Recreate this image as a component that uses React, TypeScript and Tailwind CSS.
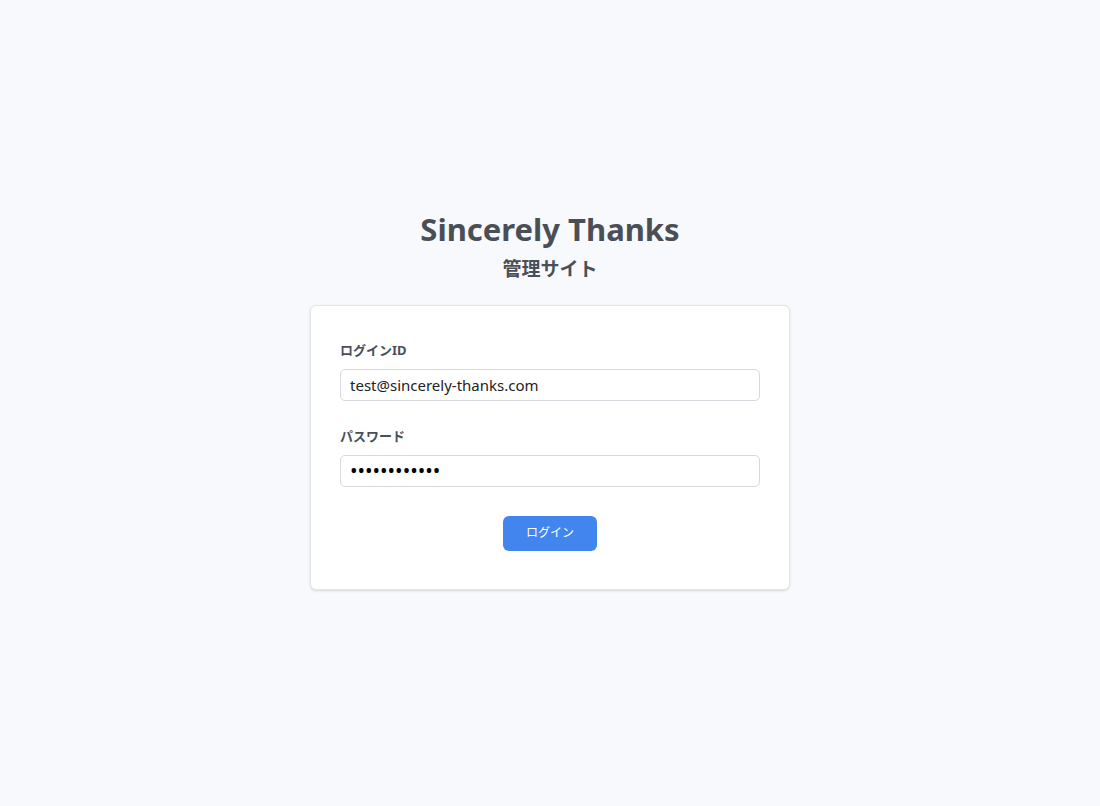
import React, { useState } from 'react';

const App: React.FC = () => {
  const [loginId, setLoginId] = useState<string>('test@sincerely-thanks.com');
  const [password, setPassword] = useState<string>('password1234');

  return (
    <div
      className="min-h-screen bg-[#f8f9fc] flex flex-col items-center justify-center pb-[6px]"
      style={{ fontFamily: '"Noto Sans", "Noto Sans CJK JP", sans-serif' }}
    >
      <h1 className="text-[31px] leading-[36px] font-bold text-[#4a4f57]">Sincerely Thanks</h1>
      <h2 className="text-[19px] leading-[28px] font-bold text-[#4a4f57] mt-[8px]">管理サイト</h2>

      <div className="mt-[22px] w-[480px] bg-white border border-[#e3e5ea] rounded-md shadow-sm px-[29px] pt-[34px] pb-[38px]">
        <label className="block text-[13px] leading-[20px] font-bold text-[#4a4f57] mb-[9px]">ログインID</label>
        <input
          type="text"
          value={loginId}
          onChange={(e) => setLoginId(e.target.value)}
          className="w-full h-[32px] border border-[#d6d9de] rounded-[5px] px-[9px] text-[15px] text-[#222] outline-none"
        />

        <label className="block text-[13px] leading-[20px] font-bold text-[#4a4f57] mt-[25px] mb-[9px]">パスワード</label>
        <input
          type="password"
          value={password}
          onChange={(e) => setPassword(e.target.value)}
          className="w-full h-[32px] border border-[#d6d9de] rounded-[5px] px-[9px] text-[20px] text-black outline-none"
        />

        <div className="flex justify-center mt-[29px]">
          <button className="w-[94px] h-[35px] bg-[#4285ee] rounded-md text-white text-[12px]">ログイン</button>
        </div>
      </div>
    </div>
  );
};

export default App;
